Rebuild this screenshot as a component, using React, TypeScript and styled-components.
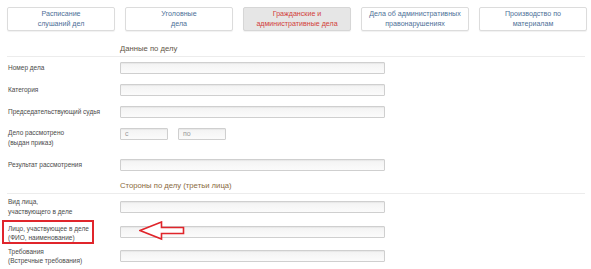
import styled, { createGlobalStyle } from "styled-components"

/** Types */

type Tab = { lines: [string, string]; active?: boolean }

/** Data */

const tabs: Tab[] = [
    { lines: ["Расписание", "слушаний дел"] },
    { lines: ["Уголовные", "дела"] },
    { lines: ["Гражданские и", "административные дела"], active: true },
    { lines: ["Дела об административных", "правонарушениях"] },
    { lines: ["Производство по", "материалам"] },
]

/** Component */

const App = () => {
    return (
        <Page>
            <GlobalStyle />
            <Tabs>
                {tabs.map((t) => (
                    <TabButton key={t.lines[0]} $active={t.active}>
                        {t.lines[0]}
                        <br />
                        {t.lines[1]}
                    </TabButton>
                ))}
            </Tabs>

            <Heading $top={11} color="#5f5648">Данные по делу</Heading>

            <Row $height={22}>
                <Label>Номер дела</Label>
                <Input />
            </Row>
            <Row $height={22}>
                <Label>Категория</Label>
                <Input />
            </Row>
            <Row $height={22}>
                <Label>Председательствующий судья</Label>
                <Input />
            </Row>
            <Row $height={28} $align="flex-start" $padTop={5}>
                <Label>
                    Дело рассмотрено
                    <br />
                    (выдан приказ)
                </Label>
                <DateGroup>
                    <SmallInput>с</SmallInput>
                    <SmallInput>по</SmallInput>
                </DateGroup>
            </Row>
            <Row $height={28}>
                <Label>Результат рассмотрения</Label>
                <Input />
            </Row>

            <Heading $top={0} color="#8a6a3e">Стороны по делу (третьи лица)</Heading>

            <Row $height={25}>
                <Label>
                    Вид лица,
                    <br />
                    участвующего в деле
                </Label>
                <Input />
            </Row>
            <Row $height={25}>
                <HighlightLabel>
                    Лицо, участвующее в деле
                    <br />
                    (ФИО, наименование)
                </HighlightLabel>
                <Field>
                    <Input />
                    <Arrow width="46" height="20" viewBox="0 0 46 20">
                        <path
                            d="M1 9.5 L22.5 1 L22.5 6.5 L44.5 6.5 L44.5 12.5 L22.5 12.5 L22.5 18 Z"
                            fill="#fff"
                            stroke="#e0252b"
                            strokeWidth="1.6"
                            strokeLinejoin="miter"
                        />
                    </Arrow>
                </Field>
            </Row>
            <Row $height={24}>
                <Label>
                    Требования
                    <br />
                    (Встречные требования)
                </Label>
                <Input />
            </Row>
        </Page>
    )
}

/** Styles */

const GlobalStyle = createGlobalStyle`
    body {
        margin: 0;
        background: #fff;
        font-family: "Liberation Sans", Arial, sans-serif;
    }
`

const Page = styled.div`
    width: 591px;
    height: 269px;
    overflow: hidden;
    box-sizing: border-box;
    padding-top: 7px;
`

const Tabs = styled.div`
    display: flex;
    gap: 10px;
    padding-left: 7px;
`

const TabButton = styled.div<{ $active?: boolean }>`
    width: 108px;
    height: 24px;
    box-sizing: border-box;
    display: flex;
    flex-direction: column;
    align-items: center;
    justify-content: center;
    text-align: center;
    white-space: nowrap;
    font-size: 7.1px;
    line-height: 10px;
    border: 1px solid ${(p) => (p.$active ? "#d6d6d6" : "#dcdcdc")};
    border-radius: 2px;
    background: ${(p) => (p.$active ? "#e6e6e6" : "#fff")};
    color: ${(p) => (p.$active ? "#d2403a" : "#4d6f97")};
    box-shadow: 0 1px 1px rgba(0, 0, 0, 0.06);
`

const Heading = styled.div<{ $top: number }>`
    margin: ${(p) => p.$top}px 6px 0 7px;
    padding-left: 113px;
    height: 14px;
    line-height: 14px;
    font-size: 7.7px;
    color: ${(p) => p.color};
    border-bottom: 1px solid #ececec;
`

const Row = styled.div<{ $height: number; $align?: string; $padTop?: number }>`
    display: flex;
    align-items: ${(p) => p.$align || "center"};
    height: ${(p) => p.$height}px;
    box-sizing: border-box;
    padding-top: ${(p) => p.$padTop || 0}px;
    padding-left: 2px;
`

const Label = styled.div`
    width: 118px;
    box-sizing: border-box;
    padding-left: 6px;
    white-space: nowrap;
    font-size: 6.5px;
    line-height: 9.5px;
    color: #4a4a4a;
`

const HighlightLabel = styled(Label)`
    width: 92px;
    height: 24px;
    margin-right: 26px;
    padding: 2px 0 0 4px;
    border: 2px solid #e0252b;
`

const Field = styled.div`
    position: relative;
`

const Input = styled.div`
    width: 265px;
    height: 12px;
    box-sizing: border-box;
    border: 1px solid #cfcfcf;
    border-radius: 1px;
    background: linear-gradient(#f3f3f3, #fbfbfb);
    box-shadow: inset 0 1px 1px rgba(0, 0, 0, 0.05);
`

const DateGroup = styled.div`
    display: flex;
    gap: 10px;
`

const SmallInput = styled(Input)`
    width: 48px;
    padding-left: 4px;
    font-size: 7px;
    line-height: 10px;
    color: #999;
`

const Arrow = styled.svg`
    position: absolute;
    left: 19px;
    top: -5px;
`

/** Exports */

export default App
